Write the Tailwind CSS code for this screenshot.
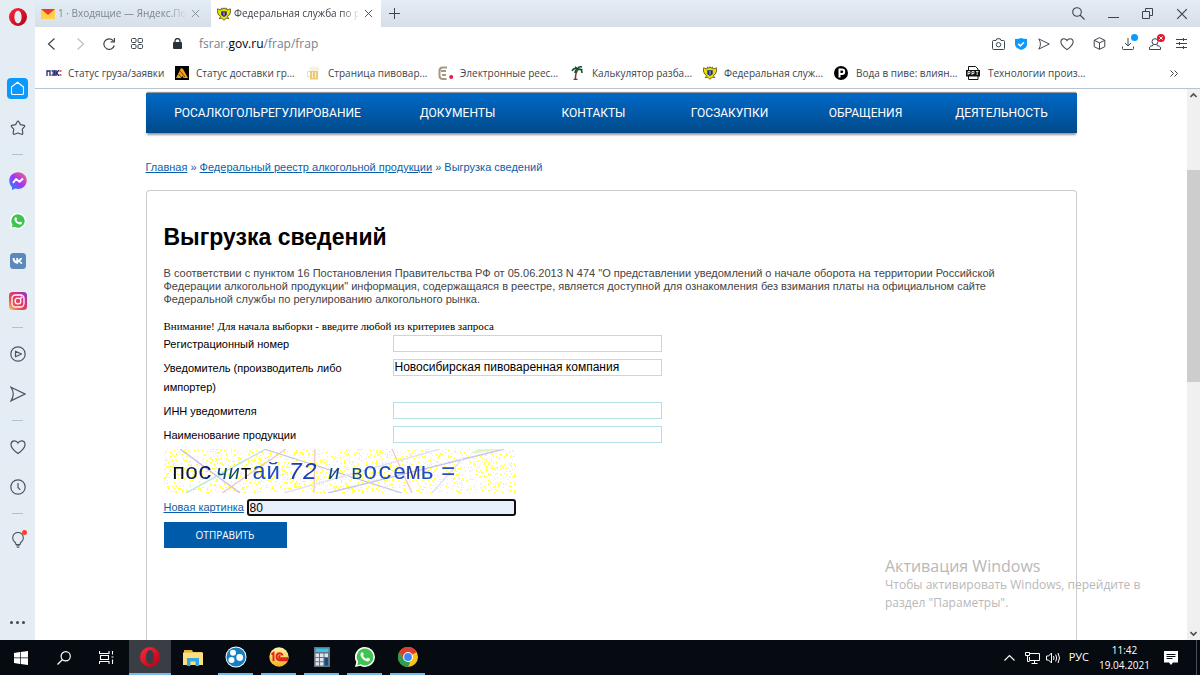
<!DOCTYPE html>
<html lang="ru">
<head>
  <meta charset="UTF-8" />
  <meta name="viewport" content="width=device-width, initial-scale=1.0"/>
  <title>Выгрузка сведений</title>
  <script src="https://cdn.jsdelivr.net/npm/@tailwindcss/browser@4"></script>
</head>
<body class="h-screen flex flex-col overflow-hidden bg-white font-['Open_Sans','Noto_Sans',sans-serif] text-[12px] text-black">

  <!-- Shared symbols -->
  <svg class="absolute w-0 h-0">
    <defs>
      <linearGradient id="operaRed" x1="0" y1="0" x2="1" y2="1">
        <stop offset="0" stop-color="#ff2a3d"/><stop offset="1" stop-color="#b00015"/>
      </linearGradient>
      <linearGradient id="msg" x1="1" y1="0" x2="0" y2="1">
        <stop offset="0" stop-color="#ff6968"/><stop offset=".5" stop-color="#a334fa"/><stop offset="1" stop-color="#0695ff"/>
      </linearGradient>
      <linearGradient id="insta" x1="0" y1="1" x2="1" y2="0">
        <stop offset="0" stop-color="#fed373"/><stop offset=".3" stop-color="#f15245"/><stop offset=".65" stop-color="#d92e7f"/><stop offset="1" stop-color="#7b3fc4"/>
      </linearGradient>
      <linearGradient id="gold" x1="0" y1="0" x2="0" y2="1">
        <stop offset="0" stop-color="#fff3a8"/><stop offset="1" stop-color="#f2b11c"/>
      </linearGradient>
    </defs>
    <symbol id="opera" viewBox="0 0 20 20">
      <path fill="url(#operaRed)" fill-rule="evenodd" d="M10 0a10 10 0 1 0 0 20a10 10 0 1 0 0-20zM10 3c2.400 0 4 3 4 7s-1.600 7-4 7s-4-3-4-7s1.600-7 4-7z"/>
    </symbol>
    <symbol id="whatsapp" viewBox="0 0 20 20">
      <path fill="#fff" d="M10 0a10 10 0 0 1 0 20c-1.700 0-3.300-.4-4.700-1.200L0 20l1.300-5A10 10 0 0 1 10 0z"/>
      <path fill="#3fc351" d="M10 1.600a8.400 8.400 0 1 1-4.200 15.700l-3.500.9.900-3.400A8.400 8.400 0 0 1 10 1.600z"/>
      <path fill="#fff" d="M6.900 5.300c.3-.2.900-.2 1.100.2l.8 1.800c.1.300 0 .6-.2.800l-.6.700c.8 1.500 1.800 2.400 3.300 3.100l.8-.9c.2-.3.500-.3.800-.2l1.700.8c.4.2.5.5.4.9-.2 1.300-1.400 2-2.600 1.900-3.300-.4-6.500-3.500-6.900-6.600 0-1 .5-1.900 1.400-2.500z"/>
    </symbol>
    <symbol id="eagle" viewBox="0 0 14 14">
      <path fill="#e9e000" stroke="#3d3900" stroke-width=".7" d="M4.500 1l1.500 1.200L7 .7l1 1.500L9.500 1l.6 2 3.300-1.200.2 3.200-1.200 3-2 1.300 1.300 2.400-2.500-.4L7 13.300l-2.200-2-2.500.4 1.300-2.400-2-1.300L.4 5l.2-3.200L3.900 3z"/>
      <path fill="#1722b5" d="M4.300 4.300h5.400v3.600L7 10 4.300 7.900z"/>
      <path fill="#e9e000" d="M6.500 5h1v3.500h-1z"/>
    </symbol>
    <symbol id="heart" viewBox="0 0 16 16">
      <path d="M8 14.500C4.500 12 1 9.200 1 5.700 1 3.500 2.600 1.900 4.500 1.900c1.500 0 2.800.8 3.500 2.200.7-1.400 2-2.200 3.500-2.200 1.900 0 3.500 1.600 3.500 3.800 0 3.500-3.500 6.300-7 8.800z"/>
    </symbol>
    <symbol id="plane" viewBox="0 0 16 16">
      <path d="M1 1.200L15 8 1 14.800Q5.500 8 1 1.200z"/>
    </symbol>
    <symbol id="cross" viewBox="0 0 10 10"><path d="M1 1l8 8M9 1L1 9"/></symbol>
  </svg>

  <div class="flex flex-1 min-h-0">

    <!-- Opera sidebar -->
    <aside class="w-[35px] shrink-0 flex flex-col items-center bg-[#e4ecf4] text-[#4b545e]">
      <button class="h-[68px] pt-2 flex items-start" aria-label="Opera"><svg class="w-[18px] h-[18px]"><use href="#opera"/></svg></button>
      <button class="h-10 flex items-center" aria-label="Домой">
        <span class="w-[21px] h-[21px] rounded-sm bg-[#0a9aff] flex items-center justify-center">
          <svg class="w-[15px] h-[15px]" viewBox="0 0 15 15" fill="none" stroke="#fff" stroke-width="1.100"><path d="M7.500 1.200L13.500 6v6.200q0 1.300-1.300 1.300H2.800q-1.300 0-1.300-1.300V6z" stroke-linejoin="round"/></svg>
        </span>
      </button>
      <button class="h-10 flex items-center" aria-label="Закладки"><svg class="w-4 h-4" viewBox="0 0 16 16" fill="none" stroke="currentColor" stroke-width="1.200" stroke-linejoin="round"><path d="M8 1.200q.6 0 .9.600l1.500 2.800 3.600.7q1.200.4.500 1.400L12.300 9.200l.5 4q0 1.400-1.300 1L8 13l-3.500 1.200q-1.300.4-1.300-1l.5-4L1.500 6.700Q.8 5.700 2 5.300l3.600-.7 1.500-2.800q.3-.6.900-.6z"/></svg></button>
      <div class="h-[13px] flex items-center"><hr class="w-[11px] border-[#b4c0cc]" /></div>
      <button class="h-10 flex items-center" aria-label="Messenger">
        <svg class="w-[18px] h-[18px]" viewBox="0 0 18 18"><path fill="url(#msg)" d="M9 .3c5 0 8.700 3.600 8.700 8.300S14 17 9 17c-1 0-1.900-.1-2.700-.4L3 17.900v-2.700C1.300 13.700.3 11.300.3 8.600.3 3.900 4 .3 9 .3z"/><path fill="none" stroke="#fff" stroke-width="2" stroke-linejoin="round" d="M4 11l3-4 3.500 2.800L14 6.500"/></svg>
      </button>
      <button class="h-10 flex items-center" aria-label="WhatsApp"><svg class="w-4 h-4"><use href="#whatsapp"/></svg></button>
      <button class="h-10 flex items-center" aria-label="ВКонтакте">
        <svg class="w-4 h-4" viewBox="0 0 16 16"><rect width="16" height="16" rx="3.500" fill="#5b88bd"/><path fill="#fff" d="M2.500 5h1.900c.4 1.700 1.100 2.900 1.900 3.200V5h1.900v1.900c.9-.2 1.600-1 2-1.900h2c-.3 1.200-1.100 2.300-2 2.900.9.500 1.900 1.300 2.400 2.900h-2.100c-.4-1-1.200-1.600-2.300-1.800v1.800H7.400C4.700 10.700 2.600 8.700 2.500 5z"/></svg>
      </button>
      <button class="h-10 flex items-center" aria-label="Instagram">
        <svg class="w-[18px] h-[18px]" viewBox="0 0 18 18" fill="none" stroke="#fff" stroke-width="1.300"><rect width="18" height="18" rx="3.500" fill="url(#insta)" stroke="none"/><rect x="3" y="3" width="12" height="12" rx="3.500"/><circle cx="9" cy="9" r="2.900"/><circle cx="12.400" cy="5.600" r=".5"/></svg>
      </button>
      <div class="h-[13px] flex items-center"><hr class="w-[11px] border-[#b4c0cc]" /></div>
      <button class="h-10 flex items-center" aria-label="Плеер"><svg class="w-4 h-4" viewBox="0 0 16 16" fill="none" stroke="currentColor" stroke-width="1.200"><circle cx="8" cy="8" r="7.200"/><path stroke-linejoin="round" d="M5.500 5.200l6 2.800-6 2.800z"/></svg></button>
      <button class="h-10 flex items-center" aria-label="Мой поток"><svg class="w-4 h-4 fill-none stroke-current stroke-[1.200]"><use href="#plane"/></svg></button>
      <div class="h-[13px] flex items-center"><hr class="w-[11px] border-[#b4c0cc]" /></div>
      <button class="h-10 flex items-center" aria-label="Избранное"><svg class="w-4 h-4 fill-none stroke-current stroke-[1.200]"><use href="#heart"/></svg></button>
      <button class="h-10 flex items-center" aria-label="История"><svg class="w-4 h-4" viewBox="0 0 16 16" fill="none" stroke="currentColor" stroke-width="1.200"><circle cx="8" cy="8" r="7.200"/><path d="M8 4v4.500l2.300 2.300"/></svg></button>
      <div class="h-[13px] flex items-center"><hr class="w-[11px] border-[#b4c0cc]" /></div>
      <button class="h-10 flex items-center relative" aria-label="Подсказки">
        <svg class="w-3.5 h-4" viewBox="0 0 14 16" fill="none" stroke="currentColor" stroke-width="1.100"><path d="M5 12.500Q5 10.800 3 9.200A5.300 5.300 0 1 1 11 9.200Q9 10.800 9 12.500z"/><path d="M5.200 13.700h3.600M5.800 15.200h2.400"/></svg>
        <span class="absolute top-2.5 -right-0.5 w-[5px] h-[5px] rounded-full bg-[#ff3b30]"></span>
      </button>
      <button class="mt-auto h-9 flex items-center gap-[3px]" aria-label="Ещё">
        <span class="w-[3px] h-[3px] rounded-full bg-[#3f4750]"></span><span class="w-[3px] h-[3px] rounded-full bg-[#3f4750]"></span><span class="w-[3px] h-[3px] rounded-full bg-[#3f4750]"></span>
      </button>
    </aside>

    <div class="flex-1 min-w-0 flex flex-col">

      <!-- Tabs -->
      <header class="h-[27px] shrink-0 flex items-center bg-linear-to-b from-[#e4ecf4] to-[#d6dfe8] text-[10px] text-[#3c444c]">
        <div class="w-[176px] h-full flex items-center pl-1.5 pr-[11px] gap-[3px] text-[#7d8790]">
          <svg class="w-3.5 h-2.5 shrink-0" viewBox="0 0 14 10"><path fill="#ffd04a" d="M0 0h14v10H0z"/><path fill="#f0392b" d="M0 0h14L7 6z"/></svg>
          <span class="whitespace-nowrap mask-r-from-85%">1 · Входящие — Яндекс.По</span>
          <button class="ml-auto" aria-label="Закрыть вкладку"><svg class="w-[9px] h-[9px] block stroke-current"><use href="#cross"/></svg></button>
        </div>
        <div class="w-[170px] h-full flex items-center pl-1.5 pr-2 gap-[3px] bg-white">
          <svg class="w-3.5 h-3.5 shrink-0"><use href="#eagle"/></svg>
          <span class="whitespace-nowrap mask-r-from-85%">Федеральная служба по р</span>
          <button class="ml-auto" aria-label="Закрыть вкладку"><svg class="w-[9px] h-[9px] block stroke-current"><use href="#cross"/></svg></button>
        </div>
        <button class="ml-2" aria-label="Новая вкладка"><svg class="w-[11px] h-[11px] block" viewBox="0 0 11 11" stroke="currentColor"><path d="M5.500 0v11M0 5.500h11"/></svg></button>
        <div class="ml-auto pr-3 flex items-center gap-[23px]">
          <button aria-label="Поиск"><svg class="w-[13px] h-[13px] block" viewBox="0 0 13 13" fill="none" stroke="currentColor" stroke-width="1.100"><circle cx="5" cy="5" r="4.300"/><path d="M8 8l4.500 4.500"/></svg></button>
          <button aria-label="Свернуть"><svg class="w-[11px] h-[11px] block" viewBox="0 0 11 11" stroke="currentColor"><path d="M0 9.500h11"/></svg></button>
          <button aria-label="Восстановить"><svg class="w-[11px] h-[11px] block" viewBox="0 0 11 11" fill="none" stroke="currentColor"><path d="M.5 3.500h7v7h-7zM3.500 3.500v-3h7v7h-3"/></svg></button>
          <button aria-label="Закрыть"><svg class="w-3 h-3 block stroke-current"><use href="#cross"/></svg></button>
        </div>
      </header>

      <!-- Address bar -->
      <div class="h-[33px] shrink-0 flex items-center pl-3 pr-[11px] text-[#3c444c]">
        <button aria-label="Назад"><svg class="w-[9px] h-3 block" viewBox="0 0 9 12" fill="none" stroke="currentColor" stroke-width="1.200"><path d="M7.500.5L1.500 6l6 5.500"/></svg></button>
        <button class="ml-5 text-[#b9c0c6]" aria-label="Вперёд"><svg class="w-[9px] h-3 block" viewBox="0 0 9 12" fill="none" stroke="currentColor" stroke-width="1.200"><path d="M1.500.5l6 5.500-6 5.500"/></svg></button>
        <button class="ml-[18px]" aria-label="Обновить"><svg class="w-3 h-3 block" viewBox="0 0 12 12" fill="none" stroke="currentColor" stroke-width="1.200"><path d="M11.300 7.500A5.300 5.300 0 1 1 10.500 3"/><path d="M11.400 0v3.800H7.600"/></svg></button>
        <button class="ml-4" aria-label="Экспресс-панель"><svg class="w-3 h-[11px] block" viewBox="0 0 12 11" fill="none" stroke="currentColor"><rect x=".5" y=".5" width="4.500" height="4" rx="1"/><rect x="7" y=".5" width="4.500" height="4" rx="1"/><rect x=".5" y="6.500" width="4.500" height="4" rx="1"/><rect x="7" y="6.500" width="4.500" height="4" rx="1"/></svg></button>
        <svg class="ml-[30px] w-[9px] h-[11px]" viewBox="0 0 9 11"><rect y="4" width="9" height="7" rx="1" fill="#28323b"/><path d="M2 4.500V3a2.500 2.500 0 0 1 5 0v1.500" fill="none" stroke="#28323b" stroke-width="1.300"/></svg>
        <a href="#" class="ml-[17px] text-[#77828c]">fsrar.<span class="text-black">gov.ru</span>/frap/frap</a>
        <div class="ml-auto flex items-center">
          <button aria-label="Снимок"><svg class="w-[13px] h-3 block" viewBox="0 0 13 12" fill="none" stroke="currentColor"><path d="M1.500 2.500H4l.8-1.700h3.400L9 2.500h2.500q1 0 1 1v7q0 1-1 1h-10q-1 0-1-1v-7q0-1 1-1z"/><circle cx="6.500" cy="6.700" r="2.200"/></svg></button>
          <button class="ml-2.5" aria-label="Защита"><svg class="w-3 h-3 block" viewBox="0 0 12 12"><path fill="#0a9aff" d="M6 0q3 1 6 1V6.500Q12 10 6 12 0 10 0 6.500V1Q3 1 6 0z"/><path fill="none" stroke="#fff" stroke-width="1.500" d="M3.300 5.900l2 2L9 4.200"/></svg></button>
          <button class="ml-[11px]" aria-label="Поделиться"><svg class="w-3 h-3 block fill-none stroke-current stroke-[1.300]"><use href="#plane"/></svg></button>
          <button class="ml-2.5" aria-label="В избранное"><svg class="w-[14px] h-[14px] block fill-none stroke-current stroke-[1.200]"><use href="#heart"/></svg></button>
          <button class="ml-[19px]" aria-label="Расширения"><svg class="w-[13px] h-[13px] block" viewBox="0 0 13 13" fill="none" stroke="currentColor" stroke-linejoin="round"><path d="M6.500.7l5.300 2.600v6.400l-5.300 2.600-5.300-2.600V3.300zM1.200 3.300l5.300 2.500 5.300-2.500M6.500 5.800v6.500"/></svg></button>
          <button class="ml-4 relative" aria-label="Загрузки"><svg class="w-3 h-3 block" viewBox="0 0 12 12" fill="none" stroke="currentColor"><path d="M6 0v8M3 5l3 3 3-3M.5 8.500v2q0 1 1 1h9q1 0 1-1v-2"/></svg><span class="absolute -top-1 -right-1 w-[7px] h-[7px] rounded-full bg-[#0a9aff]"></span></button>
          <button class="ml-[15px] relative" aria-label="Профиль"><svg class="w-3 h-3 block" viewBox="0 0 12 12" fill="none" stroke="currentColor"><circle cx="6" cy="3.700" r="3"/><path d="M4 6.500v1L1.500 8.300Q.5 8.800.5 10v1.500h11V10q0-1.200-1-1.700L8 7.500v-1"/></svg>
            <svg class="absolute -top-1 -right-1 w-2 h-2" viewBox="0 0 8 8"><circle cx="4" cy="4" r="4" fill="#e0182d"/><path stroke="#fff" d="M2.300 2.300l3.400 3.400M5.700 2.300L2.300 5.700"/></svg></button>
          <button class="ml-[15px] mr-0.5" aria-label="Настройка"><svg class="w-[11px] h-[11px] block" viewBox="0 0 11 11" stroke="currentColor"><path d="M0 1.500h11M0 5.500h11M0 9.500h11M7.500 0v3M3.500 4v3M7.500 8v3"/></svg></button>
        </div>
      </div>

      <!-- Bookmarks -->
      <nav class="h-[29px] shrink-0 flex items-center pl-[11px] pr-[22px] pb-0.5 border-b border-[#b8c4d2] text-[10px] text-[#3c444c] whitespace-nowrap">
        <a href="#" class="w-[128px] flex items-center gap-1.5"><svg class="w-4 h-1.5" viewBox="0 0 16 6" fill="none" stroke-width="1.300"><path stroke="#23286b" d="M1 6V1h3v5M5.500 1h3v4h-3M6.500 3h2M10 0v6M13 0l-2.500 3L13 6"/><path stroke="#e0304a" d="M13.500 1h2M13.500 5h2"/></svg>Статус груза/заявки</a>
        <a href="#" class="w-[132px] flex items-center gap-1.5"><svg class="w-4 h-3.5" viewBox="0 0 16 14"><path d="M1 0h14v14H1z"/><path fill="#f4a21b" d="M7 2l2 1 5 9H9.500l-1-2-1.500 2H2z"/><path stroke="#000" stroke-width=".6" d="M6 5l5 6M4.500 8l3 3.500"/></svg>Статус доставки гр...</a>
        <a href="#" class="w-[132px] flex items-center gap-1.5"><svg class="w-4 h-3.5" viewBox="0 0 16 14"><path fill="#eccb72" d="M4 3h8v10.500H4z"/><path fill="#f7f2e2" d="M3 2q2-2 5-1.500t5 1V5H3z"/><path fill="none" stroke="#e6dcc0" d="M4 5.500H1.500v5H4"/><path stroke="#fff" stroke-width=".7" d="M6.500 6v6M9.500 6v6"/></svg>Страница пивовар...</a>
        <a href="#" class="w-[132px] flex items-center gap-1.5"><svg class="w-4 h-3.5" viewBox="0 0 16 14"><path fill="none" stroke="#a89684" stroke-width="2" d="M9 1.500H4.500Q1.500 1.500 1.500 5v4.500q0 3.500 3.500 3.500h3.500M3 5h5M4 9h4"/><circle cx="13.200" cy="11" r="2" fill="#e8174b"/></svg>Электронные реес...</a>
        <a href="#" class="w-[132px] flex items-center gap-1.5"><svg class="w-4 h-3.5" viewBox="0 0 16 14" fill="none"><path stroke="#6b3d2e" stroke-width="1.500" d="M7.500 4Q5 8 5.500 13.500M3.500 13.500h4"/><path stroke="#14532d" stroke-width="1.600" d="M7.500 3.500Q4 1 2 5M7.500 3.500Q5 4 5 7M7.500 3.500Q8 0 12 1M7.500 3.500Q12 2 12 7M7.500 3.500Q6 1 5 1M7.500 3.500h5"/></svg>Калькулятор разба...</a>
        <a href="#" class="w-[132px] flex items-center gap-1.5"><svg class="w-4 h-3.5"><use href="#eagle"/></svg>Федеральная служ...</a>
        <a href="#" class="w-[132px] flex items-center gap-1.5"><svg class="w-4 h-3.5" viewBox="0 0 16 14"><circle cx="7" cy="7" r="7"/><path fill="none" stroke="#fff" stroke-width="2" d="M5.500 11.500V3.500H8Q10.200 3.500 10.200 5.700T8 8H5.500"/></svg>Вода в пиве: влиян...</a>
        <a href="#" class="flex items-center gap-1.5"><svg class="w-4 h-3.5" viewBox="0 0 16 14"><path fill="#fff" stroke="#111" d="M2.500.5h7l2.500 2.500v10.500h-9.500z"/><path fill="#111" d="M0 4h14v6.500H0z"/><path fill="none" stroke="#fff" stroke-width=".8" d="M2 9V5.500h2v2H2M6 9V5.500h2v2H6M10 5.500h2.500M11.200 5.500V9"/></svg>Технологии произ...</a>
        <button class="ml-auto" aria-label="Ещё закладки"><svg class="w-2 h-[7px] block" viewBox="0 0 8 7" fill="none" stroke="currentColor"><path d="M.5.5l3 3-3 3M4.500.5l3 3-3 3"/></svg></button>
      </nav>

      <!-- Page -->
      <div class="flex-1 min-h-0 flex font-['Liberation_Sans',Arial,sans-serif] text-[11px]">
        <main class="flex-1 min-w-0 overflow-hidden">
          <div class="max-w-[931px] h-full mx-auto flex flex-col">
            <nav class="mt-1 h-10 shrink-0 grid grid-cols-[244px_repeat(5,136px)] items-center text-center text-[12px] font-[Roboto,Arial,sans-serif] text-white bg-linear-to-b from-[#0069c8] to-[#004a8a] shadow-[0_-2px_1px_-1px_#999,0_3px_2px_-1px_#999]">
              <a href="#">РОСАЛКОГОЛЬРЕГУЛИРОВАНИЕ</a>
              <a href="#">ДОКУМЕНТЫ</a>
              <a href="#">КОНТАКТЫ</a>
              <a href="#">ГОСЗАКУПКИ</a>
              <a href="#">ОБРАЩЕНИЯ</a>
              <a href="#">ДЕЯТЕЛЬНОСТЬ</a>
            </nav>
            <p class="mt-[26px] leading-4 text-[#0b5ea8]"><a href="#" class="underline">Главная</a> » <a href="#" class="underline">Федеральный реестр алкогольной продукции</a> » Выгрузка сведений</p>

            <section class="mt-[15px] flex-1 border border-b-0 border-[#ccc] rounded-t-sm px-[17px] pt-8">
              <h1 class="text-[23px] leading-7 font-bold">Выгрузка сведений</h1>
              <p class="mt-4 max-w-[860px] leading-[13px] text-[#444]">В соответствии с пунктом 16 Постановления Правительства РФ от 05.06.2013 N 474 "О представлении уведомлений о начале оборота на территории Российской Федерации алкогольной продукции" информация, содержащаяся в реестре, является доступной для ознакомления без взимания платы на официальном сайте Федеральной службы по регулированию алкогольного рынка.</p>
              <p class="mt-3 leading-4 font-['Liberation_Serif',serif]">Внимание! Для начала выборки - введите любой из критериев запроса</p>

              <form id="searchForm">
                <div class="grid grid-cols-[229px_269px] items-start leading-[19px]">
                  <label for="regnum" class="pr-6 pt-px pb-1">Регистрационный номер</label>
                  <input type="text" id="regnum" class="mt-px h-[17px] border border-[#b5dfe6] px-px text-[12px]" />
                  <label for="notifier" class="pr-6 pt-px pb-1">Уведомитель (производитель либо импортер)</label>
                  <input type="text" id="notifier" value="Новосибирская пивоваренная компания" class="mt-px h-[17px] border border-[#b5dfe6] px-px text-[12px]" />
                  <label for="inn" class="pr-6 pt-px pb-1">ИНН уведомителя</label>
                  <input type="text" id="inn" class="mt-px h-[17px] border border-[#b5dfe6] px-px text-[12px]" />
                  <label for="product" class="pr-6 pt-px pb-1">Наименование продукции</label>
                  <input type="text" id="product" class="mt-px h-[17px] border border-[#b5dfe6] px-px text-[12px]" />
                </div>

                <div class="relative w-[352px] h-11">
                  <canvas id="noise" width="352" height="44" class="block"></canvas>
                  <svg class="absolute inset-0" width="352" height="44" viewBox="0 0 352 44" font-family="'Liberation Mono',monospace" font-size="24">
                    <g fill="none" stroke-width="1.300">
                      <path stroke="#c9b8f0" d="M16 0l60 44"/>
                      <path stroke="#b5e3dc" d="M22 44L102 0"/>
                      <path stroke="#f2c4d0" d="M58 44L122 0M228 0l20 44M151 0l-1 44"/>
                      <path stroke="#c8c4ec" d="M100 0l138 44M164 44L340 0"/>
                      <path stroke="#e4e0f4" d="M120 44L276 0M268 44L300 8"/>
                    </g>
                    <path fill="#dff5c4" d="M306 5l8-5h26z"/>
                    <text x="8" y="30" fill="#0a0a14" font-size="22">п</text>
                    <text x="21" y="30" fill="#0a1a50" font-size="22">о</text>
                    <text x="34" y="30" fill="#0a1a70">с</text>
                    <text x="52" y="30" fill="#14506e" font-size="20" font-style="italic">ч</text>
                    <text x="64" y="30" fill="#0f4a78" font-size="20" font-style="italic">и</text>
                    <text x="76" y="30" fill="#0a0a14" font-size="20">т</text>
                    <text x="88" y="30" fill="#1c4cc8">а</text>
                    <text x="102" y="30" fill="#1c4cc8">й</text>
                    <text x="124" y="30" fill="#1c3cb8" font-style="italic">72</text>
                    <text x="164" y="30" fill="#0f4a78" font-size="20" font-style="italic">и</text>
                    <text x="187" y="30" fill="#14506e" font-size="20">в</text>
                    <text x="199" y="30" fill="#1c4cc8">о</text>
                    <text x="214" y="30" fill="#1c4cc8">с</text>
                    <text x="229" y="30" fill="#1c4cc8" font-size="22">е</text>
                    <text x="242" y="30" fill="#2a3ca8">м</text>
                    <text x="256" y="30" fill="#1c4cc8">ь</text>
                    <text x="277" y="30" fill="#2a4cc8">=</text>
                  </svg>
                </div>

                <div class="mt-1.5 flex items-center">
                  <a href="#" class="w-[83px] whitespace-nowrap underline text-[#0b5ea8]">Новая картинка</a>
                  <input type="text" id="answer" aria-label="Ответ" value="80" class="w-[269px] h-[17px] border-2 border-[#101010] rounded-[3px] bg-[#e8f0fe] px-px text-[12px] outline-none" />
                </div>
                <button type="submit" class="mt-1.5 block w-[123px] h-[26px] bg-[#005cab] text-white text-[10px] font-['Open_Sans','Noto_Sans',sans-serif]">ОТПРАВИТЬ</button>
              </form>
            </section>
          </div>
        </main>

        <!-- Scrollbar -->
        <div class="w-[13px] shrink-0 flex flex-col items-center bg-[#f0f0f0] text-[#505050]">
          <svg class="w-[7px] h-[13px] shrink-0" viewBox="0 0 7 13" fill="none" stroke="currentColor" stroke-width="1.600"><path d="M.5 8l3-3 3 3"/></svg>
          <div class="mt-[68px] w-full h-[212px] bg-[#cdcdcd]"></div>
          <svg class="mt-auto w-[7px] h-[13px] shrink-0" viewBox="0 0 7 13" fill="none" stroke="currentColor" stroke-width="1.600"><path d="M.5 5l3 3 3-3"/></svg>
        </div>
      </div>
    </div>
  </div>

  <!-- Windows watermark over the page -->
  <div class="absolute right-[39px] bottom-[63px] w-[276px] pointer-events-none leading-[18px] text-[#b8b8b8]">
    <div class="text-[16px] leading-5 whitespace-nowrap">Активация Windows</div>
    <div class="whitespace-nowrap">Чтобы активировать Windows, перейдите в<br>раздел "Параметры".</div>
  </div>

  <!-- Taskbar -->
  <footer class="h-[35px] shrink-0 flex items-center bg-[#060b12] text-white text-[11px]">
    <button class="w-[42px] h-full flex items-center justify-center" aria-label="Пуск"><svg class="w-3.5 h-3.5" viewBox="0 0 14 14" fill="#fff"><path d="M0 2l6-.9v5.500H0zM6.700 1L14 0v6.600H6.700zM0 7.300h6v5.600L0 12zM6.700 7.300H14V14l-7.300-1z"/></svg></button>
    <button class="w-[43px] h-full flex items-center justify-center" aria-label="Поиск"><svg class="w-3.5 h-3.5" viewBox="0 0 14 14" fill="none" stroke="#fff" stroke-width="1.200"><circle cx="8.700" cy="5.300" r="4.600"/><path d="M5.500 8.500L.5 13.500"/></svg></button>
    <button class="w-[43px] mr-px h-full flex items-center justify-center" aria-label="Представление задач"><svg class="w-[15px] h-[13px]" viewBox="0 0 15 13" fill="none" stroke="#fff" stroke-width="1.100"><path d="M.5 0v2.500h9.500V0M.5 13v-2.500h9.500V13M1.500 4.500h8v4h-8zM13.500 0v3.500M13.500 8.500V13M12.500 6h2"/></svg></button>
    <button class="w-[42px] h-full flex items-center justify-center bg-[#3a3e44] border-b-2 border-[#76b9ed]" aria-label="Opera"><svg class="w-5 h-5"><use href="#opera"/></svg></button>
    <button class="w-[43px] h-full flex items-center justify-center" aria-label="Проводник"><svg class="w-5 h-[17px]" viewBox="0 0 20 17"><path fill="#e8b339" d="M1 1h8l1 2h9v3H1z"/><path fill="#fbdf85" d="M0 3.500h20V16H0z"/><path fill="#36a9e1" d="M4 9h12v8h-3.500v-4.500h-5V17H4z"/></svg></button>
    <button class="w-[35px] mx-1 h-full flex items-center justify-center border-b-2 border-[#76b9ed]" aria-label="Приложение"><svg class="w-[22px] h-[22px]" viewBox="0 0 22 22"><circle cx="11" cy="11" r="10.500" fill="#fff"/><circle cx="11" cy="11" r="9.600" fill="#1280c4"/><g fill="#fff"><circle cx="8" cy="6.700" r="3"/><circle cx="6.500" cy="14" r="3"/><circle cx="14.700" cy="11.500" r="3.400"/></g></svg></button>
    <button class="w-[35px] mx-1 h-full flex items-center justify-center border-b-2 border-[#76b9ed]" aria-label="1С"><svg class="w-5 h-5" viewBox="0 0 20 20"><circle cx="10" cy="10" r="9.700" fill="url(#gold)"/><path fill="none" stroke="#e0231c" stroke-width="1.900" d="M2.500 7.500l2-1.500v8M13.500 8.500Q13 6.300 10.500 6.300 7.500 6.500 7.500 9.700T11 13.300h8M11.500 9q-1.500-.2-1.500 1t1.500 1.200h7.500"/></svg></button>
    <button class="w-[35px] mx-1 h-full flex items-center justify-center border-b-2 border-[#76b9ed]" aria-label="Калькулятор"><svg class="w-4 h-5" viewBox="0 0 16 20"><path fill="#66727c" d="M0 0h16v20H0z"/><path fill="#35c5f0" d="M1.500 1.500h13v3.500h-13z"/><path fill="#dfe5ea" d="M1.500 6.500h3.500v3.500H1.500zM6 6.500h3.500v3.500H6zM10.500 6.500H14v3.500h-3.500zM1.500 11h3.500v3.200H1.500zM6 11h3.500v3.200H6zM1.500 15.300h3.500v3.200H1.500zM6 15.300h3.500v3.200H6z"/><path fill="#0f4d8c" d="M10.500 11H14v7.500h-3.500z"/></svg></button>
    <button class="w-[35px] mx-1 h-full flex items-center justify-center border-b-2 border-[#76b9ed]" aria-label="WhatsApp"><svg class="w-5 h-5"><use href="#whatsapp"/></svg></button>
    <button class="w-[35px] mx-1 h-full flex items-center justify-center border-b-2 border-[#76b9ed]" aria-label="Chrome"><svg class="w-5 h-5" viewBox="0 0 20 20"><circle cx="10" cy="10" r="10" fill="#fbc116"/><path fill="#d9402f" d="M10 10L1.300 5A10 10 0 0 1 18.700 5z"/><path fill="#2f9e4c" d="M10 20A10 10 0 0 1 1.300 5L5.700 12.500 10 14.500 12 16z"/><path fill="#d9402f" d="M1.300 5l4.400 7.500L10 5.500h9z"/><circle cx="10" cy="10" r="4.900" fill="#fff"/><circle cx="10" cy="10" r="3.900" fill="#4285f4"/></svg></button>

    <div class="ml-auto h-full flex items-center">
      <button aria-label="Скрытые значки"><svg class="w-[11px] h-1.5 block" viewBox="0 0 11 6" fill="none" stroke="#fff" stroke-width="1.100"><path d="M.5 5.500l5-5 5 5"/></svg></button>
      <button class="ml-2.5" aria-label="Сеть"><svg class="w-[15px] h-3 block" viewBox="0 0 15 12" fill="none" stroke="#fff"><path d="M5 1.500h9.500v7H4.500V5M9.500 8.500v3M6.500 11.500h6M.5.500h4v3h-4zM2.500 3.500v6h2"/></svg></button>
      <button class="ml-1.5" aria-label="Громкость"><svg class="w-[15px] h-3 block" viewBox="0 0 15 12" fill="none" stroke="#fff"><path d="M.5 4h2l3-3v10l-3-3h-2zM7.500 4q1 2 0 4M9.700 2.500q2 3.500 0 7M12 1q3 5 0 10"/></svg></button>
      <button class="ml-2">РУС</button>
      <time class="ml-3 w-[47px] flex flex-col items-center leading-[15px] text-[10px]"><span>11:42</span><span>19.04.2021</span></time>
      <button class="ml-4 mr-[18px]" aria-label="Уведомления"><svg class="w-3.5 h-3.5 block" viewBox="0 0 14 14"><path fill="#fff" d="M0 0h14v11.500H9L7 14l-2-2.500H0z"/><path stroke="#060b12" d="M2.500 3.500h9M2.500 5.500h9M2.500 7.500h6"/></svg></button>
      <div class="w-1 h-full border-l border-[#4a4f55]"></div>
    </div>
  </footer>

  <script>
    // speckle behind the question
    const canvas = document.getElementById("noise");
    const ctx = canvas.getContext("2d");
    let seed = 72;
    function rand() {
      seed = (seed * 16807) % 2147483647;
      return seed / 2147483647;
    }
    ctx.fillStyle = "#ffff3c";
    for (let i = 0; i < 2200; i++) {
      ctx.fillRect(Math.floor(rand() * 352), Math.floor(rand() * 44), 1, 1);
    }

    document.getElementById("searchForm").addEventListener("submit", function(e) {
      e.preventDefault();
    });
  </script>
</body>
</html>
